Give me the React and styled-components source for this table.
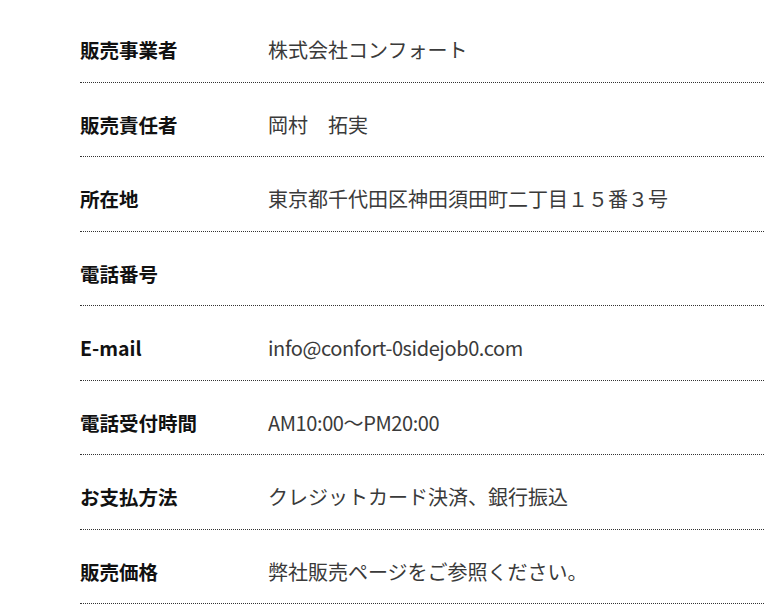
import React from 'react'
import styled, { createGlobalStyle } from 'styled-components'

const GlobalStyle = createGlobalStyle`
    body {
        margin: 0;
        background: #fff;
        font-family: "Noto Sans CJK JP", "Noto Sans", sans-serif;
    }
`

const Table = styled.dl`
    margin: 0;
    padding: 8px 0 0 80px;
`

const Row = styled.div`
    display: flex;
    align-items: flex-start;
    padding: 26px 0 15px;
    border-bottom: 1px dotted #333;
    line-height: 32.5px;
`

const Label = styled.dt`
    flex: 0 0 188px;
    margin: 0;
    font-size: 19.5px;
    font-weight: 700;
    color: #111;
`

const Value = styled.dd`
    margin: 0;
    font-size: 20px;
    font-weight: 400;
    color: #3a3a3a;
    letter-spacing: ${({ $latin }) => ($latin ? '-0.4px' : '0')};
`

const rows = [
    ['販売事業者', '株式会社コンフォート'],
    ['販売責任者', '岡村　拓実'],
    ['所在地', '東京都千代田区神田須田町二丁目１５番３号'],
    ['電話番号', ''],
    ['E-mail', 'info@confort-0sidejob0.com', true],
    ['電話受付時間', 'AM10:00〜PM20:00', true],
    ['お支払方法', 'クレジットカード決済、銀行振込'],
    ['販売価格', '弊社販売ページをご参照ください。'],
]

const App = () => (
    <>
        <GlobalStyle />
        <Table>
            { rows.map(([label, value, latin]) => (
                <Row key={label}>
                    <Label>{label}</Label>
                    <Value $latin={latin}>{value}</Value>
                </Row>
            )) }
        </Table>
    </>
)

export default App
